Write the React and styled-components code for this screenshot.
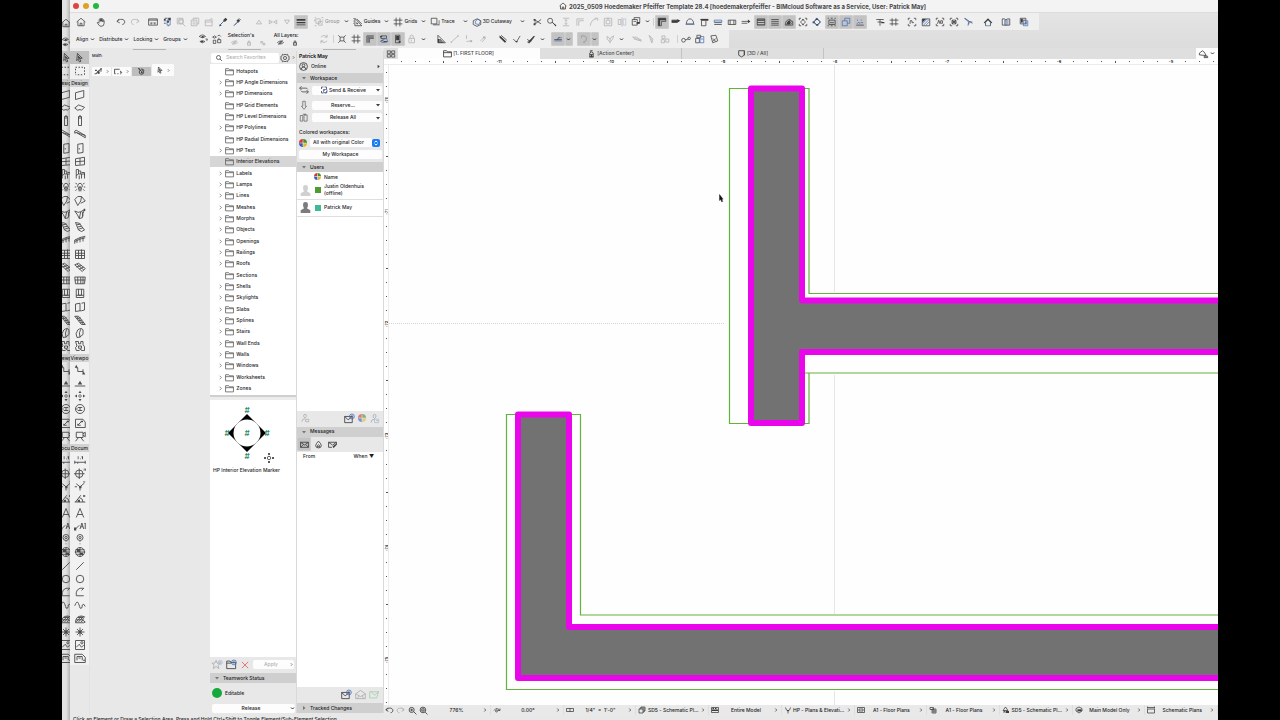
import React, { useState } from 'react';
import styled, { createGlobalStyle, css } from 'styled-components';

const GlobalStyle = createGlobalStyle`
  * { box-sizing: border-box; }
  body { margin: 0; background: #000; }
  button, input, select { font: inherit; color: inherit; }
  button { border: 0; padding: 0; margin: 0; background: none; }
`;

/* every icon is drawn in a 16 x 16 box: [strokes, solid parts, accent strokes] */
const ICONS = {
  home: ['M1 8 8 2l7 6M3 7v7h10V7M6.500 14v-4h3v4'],
  hand: ['M5 9V4q1-1.500 2 0v3V2.500q1-1.500 2 0V7 3.500q1-1.500 2 0V8 5.500q1-1.500 2 0V10q0 5-5 5-3 0-6-6 1-2 3 1'],
  undo: ['M5 3 1.500 7 6 9.500M2 7c4-5 12-4 12 1 0 2-2 4-4 4'],
  redo: ['M11 3l3.500 4L10 9.500M14 7C10 2 2 3 2 8c0 2 2 4 4 4'],
  info: ['M1 3h14v10H1zM1 5h14M5 8v3M8 8v1M8 10v1M11 8v3M4 11h2M10 11h2'],
  pickup: ['M4 2h5M3 6h3M3 10h3', 'M8 6h3v3H8zM3 3h3v2H3zM10 1h4v4h-4z', 'M8 5h5v8H8zM10 13v2'],
  find: ['M2 2h9v9H2zM4 5h5M4 8h3M11 11l4 4M12 7a4 4 0 1 1-8 0 4 4 0 0 1 8 0'],
  sheet: ['M2 5h9v9H2zM5 5V2h9v9h-3M4 8h5M4 11h5M8 2V1M11 2V1'],
  sheet2: ['M2 5h11v9H2zM2 8h11M9 5l3-3 2 2'],
  pipette: ['M3 13 9 7', 'M8 5 12 1l3 3-4 4zM2 15l1-4 3 2z', 'M3 13 10 6'],
  syringe: ['M3 14 9 8M11 2l3 3', 'M7 6l3-3 3 3-3 3z', 'M4 13l6-6'],
  triUp: ['M4 11h8L8 5z'],
  bow: ['M2 5v6l5-3zM14 5v6L9 8z'],
  triDown: ['M4 5h8l-4 6z'],
  layers: ['', 'M1 3h14v3H1zM1 8h14v2H1zM1 12h14v1H1z'],
  group: ['M3 3h7v7H3zM7 7h6v6H7zM1 1h2M12 1h3M1 14h3M14 4v2M1 4v3'],
  guides: ['M3 2v12h11zM6 9v2h2zM1 2v1M1 6v1M1 10v1M6 3l8 8'],
  grids: ['M5 1v14M11 1v14M1 5h14M1 11h14'],
  trace: ['M2 2h9v9H2z', 'M5 13h10V5h-1v7H5z'],
  cutaway: ['M2 6l6-3 6 3v6l-6 3-6-3z', '', 'M5 8l4-5 5 3-3 6-5-1z'],
  split: ['M2 4l11 7M2 12 13 4M2 8h3', 'M1 3h3v3H1zM1 10h3v3H1z'],
  lens: ['M9 6a4 4 0 1 1-8 0 4 4 0 0 1 8 0M8 8l6 6', 'M8 8l7 5-1 2z'],
  arrowsV: ['M3 2h10M3 14h10M8 4v8M6 6l2-2 2 2M6 10l2 2 2-2'],
  corner: ['M3 14V3h11M6 14V6h8'],
  curve: ['M2 14q1-10 10-11M9 2h5v4'],
  box: ['M2 2h12v12H2zM5 5h6v6H5zM8 1v4'],
  mirror: ['M8 1v14M2 4h4v8H2z', '', 'M10 3h4v10h-4z'],
  stack: ['M2 4h8v9H2zM5 4V1h9v8h-4M4 7h4', 'M9 8h5v3H9z'],
  wallCorner: ['M2 14V2h12v5H7v7z', 'M2 2h12v3H5v9H2z'],
  wallEnd: ['M1 5h9M1 8h9', 'M1 5h9v4H1zM10 3l5 3-5 3z'],
  dome: ['M2 11q1-8 6-8t6 8z', '', 'M1 12h14'],
  wallTop: ['M2 4h12M4 6v8h7V6', 'M3 3h12v3H3z'],
  bars: ['M2 9h12M2 12h12', '', 'M2 5h12v3H2z'],
  boxes: ['M2 5h12v7H2zM5 5v7M11 5v7'],
  arrowR: ['M1 7h12M1 10h9', 'M11 4l4 3-4 3z'],
  hatch: ['M2 3h12v10H2z', 'M2 4h12v2H2zM2 8h12v1H2zM2 11h12v1H2z'],
  lines: ['M2 4h12M2 7h12M2 10h12M2 13h12'],
  fillHatch: ['M2 13q0-9 8-9 0 3 4 3v6zM4 12l6-6M7 12l5-5M10 12l3-3', 'M4 12q0-6 6-7v7z'],
  diamondBox: ['M2 5V2h3M11 2h3v3M14 11v3h-3M5 14H2v-3M8 4l4 4-4 4-4-4z', 'M7 3h2v2H7zM7 11h2v2H7z'],
  diamond: ['M8 3l5 5-5 5-5-5z', 'M7 1l3 2-2 2-3-1zM7 11h3v3H7zM1 7h3v3H1z', 'M8 2l6 6-6 6-6-6z'],
  suspend: ['M3 5h10v7H3zM1 2h2M6 2h3M12 2h2M1 14h2M6 14h3M12 14h2M5 9h6'],
  copyBlue: ['', '', 'M2 6h8v8H2zM6 6V2h8v8h-4'],
  users: ['M2 13h12', '', 'M3 11l3-3 2 3M9 9h4M4 4v2M10 4v2'],
  align: ['M2 4h12M4 8h8M8 4v10', 'M10 8h5v2h-5z'],
  beams: ['M1 5h14M1 11h14M5 2v12M11 2v12'],
  bracket: ['M2 5V2h3M11 2h3v3M14 11v3h-3M5 14H2v-3M5 6h3v3h3M5 11V6'],
  hatchBlue: ['M2 3h12v11H2z', 'M2 3h6l-6 6z', 'M4 13l9-9M8 13l6-6M2 11l8-8'],
  label: ['M2 5V2h3M11 2h3v3M14 11v3h-3M5 14H2v-3M4 11l2-6 2 6M9 6h3v4H9z'],
  gears: ['M2 5V2h3M11 2h3v3M14 11v3h-3M5 14H2v-3M5 5l6 6M11 5l-6 6M4 8h8M5 5h6v6H5z'],
  node: ['M3 2l7 5-1 5M10 7l5 3', '', 'M2 2l6 5M9 7l6 1M9 7l-1 7'],
  roof: ['M4 9v5M12 9v5', 'M1 9l7-7 7 7-2 1-5-5-5 5z', 'M4 14h8'],
  book: ['M8 4v10M2 3h4l2 2 2-2h4v10H2z', '', 'M6 4v9M11 4v9'],
  windows: ['M2 2h9v9H2zM5 5h5', 'M3 3h3v6H3z', 'M7 6h7v8H7zM9 9h4M9 11h4'],
  eyes: ['M2 4q5-5 10 0-5 4-10 0M3 12q4-3 8 0-4 4-8 0M12 8h3l-1 3', 'M6 3h3v3H6zM5 11h3v2H5z'],
  eyeLock: ['M1 5q3-4 6 0-3 3-6 0M9 3q3-3 5 1M2 10h4v5H2zM9 9h5v5H9zM11 9V6'],
  eyeOff: ['M1 8q7-7 14 0-7 7-14 0M3 14 13 2M10 8a2 2 0 1 1-4 0 2 2 0 0 1 4 0'],
  lock: ['M4 7h8v7H4zM6 7V3q2-2 4 0v4', 'M7 9h2v3H7z'],
  trail: ['M2 4h5v4H2zM8 9h5v4H8z'],
  cycle: ['M3 5q5-5 10 0M13 1v4H9M3 11q5 5 10 0M3 15v-4h4'],
  snap: ['M5 5h6v6H5zM2 2l3 3M14 2l-3 3M2 14l3-3M14 14l-3-3'],
  gridHash: ['M5 1v14M11 1v14M1 5h14M1 11h14'],
  cornerOn: ['M3 14V3h11M7 14V7h7M5 14v-9h9'],
  snapBlue: ['M3 3h9v4H3zM2 12l3-2 3 2', 'M2 3h3v2H2zM8 11h5v2H8z', 'M4 10l8-3 2 5-9 2z'],
  column: ['M4 2h7v12H4z', 'M5 3h5v7H5zM9 11h3v3H9z'],
  padlock: ['M3 7h9v7H3zM5 7V3q3-3 5 0v4M7 9v3'],
  setSquare: ['M3 2v12h12zM6 8v3h3z', 'M3 8v6h9v-2H5V8z'],
  dashLine: ['M2 13 13 3', 'M1 12h2v2H1zM12 2h2v2h-2z'],
  snapPt: ['M4 2v6M4 12l7-1', 'M10 10h3v3h-3z'],
  magnet: ['M4 11l6-6M6 13l6-6', 'M8 4h4v3H8z'],
  quick: ['M12 9a4 4 0 1 1-8 0 4 4 0 0 1 8 0M3 3l5 5M8 3l5 3', 'M7 8h3v3H7zM2 2h3v2H2z'],
  polyMode: ['M1 12h3l3-5h7M5 12l6-8', 'M2 5h3v2H2zM11 2h3v3h-3zM7 9h3v3H7z'],
  areaMode: ['M1 12V4h9M1 12h2M6 12h2M11 12h2', 'M11 6l4 4-4 0z'],
  slash2: ['M2 3l11 10M5 2l9 8', 'M2 5l9 9 2-2-9-9z'],
  tee: ['M2 8l5 5 6-10', 'M5 11l3 3 1-3z'],
  cross: ['M2 8l5 5L14 3M2 13 13 5', 'M3 14l9-11 1 1-8 11z'],
  gravity: ['M2 9h12M6 9l5-4', '', 'M2 11h12M8 6h6'],
  arc: ['M4 3q8-1 8 5 0 4-5 5M4 3v3M7 13l2 1'],
  leaf: ['M3 4q3 0 5 5 1-5 6-6M3 4q-1 5 5 9 5-4 6-10M8 9v6'],
  slabs: ['M1 5h6l8 5H9zM3 8h6l6 4'],
  wedge: ['M5 2l6 6-2 6z', '', 'M7 5l4 9'],
  chain: ['M3 3h5v4H3zM2 9h5v5H2zM9 8h5v5H9z'],
  key: ['M7 10a3 3 0 1 1-6 0 3 3 0 0 1 6 0M7 9h3l1-2M15 7a2 2 0 1 1-4 0 2 2 0 0 1 4 0'],
  lockDoc: ['M3 2h6v4H3zM1 7h6v7H1z', '', 'M8 4h6v10H8zM9 8h4'],
  tagDoc: ['M3 3l8-1 3 9-8 3zM6 7l5 5M11 7l-5 5'],
  arrow: ['M5 2l7 7-4 .5 2 4-2 1-2-4-2 2z', 'M6 5l4 4-3 0-1 2z'],
  marquee: ['M2 3h2M6 3h2M10 3h2M14 3v2M14 7v2M14 11v2M11 13H9M7 13H5M3 13H2M2 11V9M2 7V5'],
  wall: ['M2 5l11-3v9L2 14z'],
  slab: ['M1 8l5-4 3 1 5 2-4 4-2-1-3 1z'],
  pillar: ['M6 2h4v12H6zM6 4h4M7 1h2'],
  beam: ['M1 4l2-1 12 7v3L3 6 1 7zM3 6l12 4'],
  door: ['M5 3l7-1v12l-7 1zM7 8v2'],
  window: ['M2 5l12-2v10L2 14zM8 4v9M2 9l12-1'],
  chair: ['M3 2h3v6h4v6M3 2v12M6 8l-3 2M10 8h4v6M10 6h4v4M7 10v5M6 4h3v4'],
  bulb: ['M8 3a3.500 3.500 0 0 0-2 6v2h4V9a3.500 3.500 0 0 0-2-6M6 13h4M2 3l2 1M14 3l-2 1M1 8h2M13 8h2M2 13l2-2M14 13l-2-2M7 7l1 3 1-3'],
  roofTool: ['M1 6l4-4h5l-1 6-4 6zM10 2l5 6-6 3'],
  shell: ['M1 4q5 3 8 1l5-3q-3 6-3 11l-4 1Q5 9 1 4M9 5l-2 9M11 5l1 6', 'M13 1h2v3h-2z'],
  stair: ['M2 2l5 1 7 9-4 2-4-2zM4 5l5-1M5 8l5-1M6 11l6-2'],
  rail: ['M1 8q7-4 14-5M1 8v5M4 7v5M8 5v6M12 4v6M1 10q7-4 14-5'],
  curtain: ['M2 3h12v11H2zM6 3v11M10 2v12M2 7h12M2 10h12'],
  mesh: ['M1 5l5-2 9 7-4 4zM3 8l7-2M7 11l6-3M4 4l9 8'],
  glass: ['M1 4h14l-1 9H2zM1 8h14M5 4v9M9 4v9M12 4v9'],
  zoneTool: ['M3 3h10v11H3zM6 3v8h4V3M3 11h10'],
  opening: ['M2 4l6-1v10l-6 1zM10 3l4-1v10l-4 1M8 13h2'],
  ramp: ['M1 3h5l9 11h-5zM4 6l5-1M6 9l5-1M8 12l5-1M3 3l10 11'],
  morph: ['M5 4q5-4 7 0v6q-5 5-8 4-3-5 1-10M9 3q-3 4-1 11'],
  cloud: ['M2 2h4v3h3V2h3v4l2 3v5h-4l-1-2-2 2H3l-1-4 2-2zM6 8h4v3H6z'],
  section: ['M3 5h2v5h7M12 7v6', 'M1 5l2-4 2 4zM11 14l2-4 2 4z'],
  elevation: ['M1 12h14', 'M5 10l3-5 3 5z'],
  intElev: ['M8 6l2 2-2 2-2-2z', 'M8 1l2 3H6zM8 15l2-3H6zM1 8l3-2v4zM15 8l-3-2v4z'],
  worksheet: ['M14 8A6 6 0 1 1 2 8a6 6 0 0 1 12 0M5 6h6M5 10h6M8 6v4M2 8h3'],
  detail: ['M2 3h10l3 4v7H2zM5 11l5-5M5 11V9M5 11h4', 'M9 5h3v2H9z'],
  camera: ['M3 3h9v7H3zM15 3l-3 2M15 9l-3-2M15 3v6M6 10l-4 5M9 10l4 5'],
  dim: ['M1 11h14M1 9v4M15 9v4M5 11v2', 'M5 3h1v4H5zM8 6h1v1H8zM10 3h2v4h-1z'],
  level: ['M12 9A5 5 0 1 1 2 9a5 5 0 0 1 10 0M7 2v14M0 9h14', 'M13 2h1v3h-1zM15 2h1v3h-1z'],
  radial: ['M8 9v5M8 9 3 5M8 9l6-5M1 9h3', 'M7 8h3v3H7zM12 2h3v1h-3z'],
  angle: ['M1 12h14M2 12l7-9M7 6q5 1 5 6', 'M5 9h3v3H5zM12 3h3v2h-3z'],
  letter: ['M3 14 8 2l5 12M5 10h6'],
  labelTool: ['M2 12l5-5M8 12l2.500-8 2.500 8M9 9h3M14 5l1-1v8', 'M0 10h3v4H0z'],
  pin: ['M12 6a4 4 0 1 1-8 0 4 4 0 0 1 8 0M9.500 6a1.500 1.500 0 1 1-3 0 1.500 1.500 0 0 1 3 0M8 11v1M8 14v1'],
  globe: ['M14 8A6 6 0 1 1 2 8a6 6 0 0 1 12 0M2 5h12M1 8h14M3 11h10M8 2v12', 'M4 4h4v4H4zM8 9h4v3H8z'],
  line: ['M3 13 13 3'],
  circle: ['M13 8A5 5 0 1 1 3 8a5 5 0 0 1 10 0'],
  polyline: ['M13 3H8Q3 5 3 9v4h10M10 6l3-3'],
  spline: ['M1 9q3-8 5-3t2 6q3 2 3-4 2-3 4 2'],
  fill: ['M2 13q0-9 8-9l4 1-3 4 4 3-2 1zM3 12l7-8M6 12l6-7M9 12l4-3M3 9h8M5 6h7'],
  hotspot: ['M8 2v12M2 8h12M4 4l8 8M12 4l-8 8', 'M6 6h4v4H6z'],
  figure: ['M2 2h12v12H2zM3 11l4-4 3 4 3-3M12 5a1.500 1.500 0 1 1-3 0 1.500 1.500 0 0 1 3 0'],
  drawing: ['M1 3h10l4 4v7H1zM4 11V6h7v5M6 8h3M12 11h3'],
  folder: ['M1 3v11h14V5H8L6.500 3H1zM1 6.500h14'],
  chevron: ['M6 4l4 4-4 4'],
  caret: ['', 'M4 6h8l-4 5z'],
  caretR: ['', 'M6 4v8l5-4z'],
  search: ['M11 7a4 4 0 1 1-8 0 4 4 0 0 1 8 0M10 10l4 4'],
  gear: ['M8 2l2 1 2-1 1 3 2 1-1 2 1 2-2 1-1 3-2-1-2 1-2-1-2 1-1-3-2-1 1-2-1-2 2-1 1-3 2 1zM10.500 8a2.500 2.500 0 1 1-5 0 2.500 2.500 0 0 1 5 0'],
  person: ['M10.500 6a2.500 2.500 0 1 1-5 0 2.500 2.500 0 0 1 5 0M4 13q0-4 4-4t4 4M15 8A7 7 0 1 1 1 8a7 7 0 0 1 14 0'],
  swap: ['M4 2 1 5l3 3M1 5h11l2 2M12 8l3 3-3 3M15 11H5L3 9'],
  down: ['M6 2h4v8h2l-4 5-4-5h2z'],
  release: ['M2 4h4v9H2zM8 3h5v10H8zM6 2h4M10 1v3'],
  sync: ['M3 6V2h4M9 2h4v4M13 10v4H9M7 14H3v-4', 'M7 7h3v2H7z', 'M7 7h7v6H7z'],
  bust: ['', 'M8 0q4 0 3.500 5 0 2-1.500 4l5 3v4H1v-4l5-3q-1.500-2-1.500-4Q4 0 8 0'],
  mail: ['M1 5h11v9H1zM1 5l5 5 6-5', '', 'M15 5a3.500 3.500 0 1 1-7 0 3.500 3.500 0 0 1 7 0M11.500 3v2h2'],
  mailOpen: ['M1 7l7-5 7 5v7H1zM1 7l7 4 7-4M3 14l3-4M13 14l-3-4'],
  mailOk: ['M1 4h13l-3 9H1zM3 4l5 5 6-5'],
  mailBox: ['M1 4h14v9H1zM1 4l7 5 7-5M1 13l5-5M15 13l-5-5'],
  drop: ['M8 2q5 5 5 8 0 4-5 4t-5-4q0-3 5-8M6 10q2-3 4 0v2H6z'],
  mailEdit: ['M1 4h14v5M1 4v9h6M1 4l7 5 7-5', 'M8 12l5-5 2 2-5 5z'],
  userTag: ['M8 2q3 0 2 4l-2 2-2-2q-1-4 2-4M3 14q0-5 5-5M9 10h5v4H9z', '', ''],
  userBlue: ['M8 2q3 0 2 4l-2 2-2-2q-1-4 2-4M3 14q0-5 5-5', '', 'M8 9h6v5H8zM10 11h3'],
  star: ['M6 2l1.500 4H12L9 9l1 5-4-3-4 3 1-5-3-3h4z', '', 'M15 5a3 3 0 1 1-6 0 3 3 0 0 1 6 0M12 3v4M10 5h4'],
  folderAdd: ['M1 4v10h13V5H7L6 3H1zM1 6h7', '', 'M15 5a3.500 3.500 0 1 1-7 0 3.500 3.500 0 0 1 7 0M11.500 3v4M9.500 5h4'],
  close: ['M3 3l10 10M13 3 3 13'],
  quad: ['M2 3h5v4H2zM9 3h5v4H9zM2 9h5v4H2zM9 9h5v4H9z'],
  action: ['M5 14V7l3-2 3 2v7zM4 14h8M5 10h6M6 5V3h4', 'M7 10h2v4H7z'],
  cube: ['M3 3h10v8l-5 3-5-3zM13 3v8'],
  cloudTool: ['M2 10q-1-3 2-4 2-4 5 0l3 5zM9 12h5v2H9z'],
  zoomIn: ['M11 7a4.500 4.500 0 1 1-9 0 4.500 4.500 0 0 1 9 0M10 10l5 5M4 7h5M6.500 4.500v5'],
  zoomFit: ['M12 7a5 5 0 1 1-10 0 5 5 0 0 1 10 0M11 11l4 4M5 5h4v4H5z'],
  rotate: ['M2 9q3-6 9-3l2 3M10 9h4V5M5 10a2 2 0 1 0 4 0 2 2 0 0 0-4 0'],
  scale: ['M1 5h14v6H1zM8 5v6'],
  copies: ['M2 6h8v8H2zM4 6V4h8v8h-2M6 4V2h8v8h-2'],
  model: ['M1 3h14v10H1z', 'M2 7h12v3H2zM3 4h3v2H3zM8 4h3v2H8z'],
  pen: ['M3 3q1 6 5 7 4-1 5-7M8 10v5', 'M6 8h4v2H6z'],
  frame: ['M1 3h14v10H1zM4 6h8v4H4z'],
  folderDoc: ['M2 3h7v4H2zM6 6h8v8H6zM8 8h4v4H8z'],
  override: ['M7 2l5 7H2zM2 12h12M5 9v3M10 9v3', 'M8 10h6v4H8z'],
  reno: ['M2 5l6-3 6 3v5l-6 4-6-4zM4 8h9M4 10h9', 'M6 7h7v3H6z'],
  dimStd: ['M1 6h14v8H1zM1 3h14M1 1v4M15 1v4'],
};

const Svg = styled.svg`
  display: block;
  flex: none;
  width: ${p => p.$s}px;
  height: ${p => p.$s}px;
  opacity: ${p => (p.$dim ? 0.35 : 1)};
  color: ${p => p.$c || '#3c3c3e'};
  fill: none;
  stroke: currentColor;
  stroke-width: ${p => (p.$s < 7 ? 2 : p.$s < 10 ? 1.5 : 1.2)};
  overflow: visible;
`;

const Icon = ({ name, size = 11, dim, color, accent = '#4a6fb5' }) => {
  const [d, solid, extra] = ICONS[name];
  return (
    <Svg viewBox="0 0 16 16" $s={size} $dim={dim} $c={color} aria-hidden="true">
      {d && <path d={d} />}
      {solid && <path d={solid} fill="currentColor" stroke="none" />}
      {extra && <path d={extra} stroke={accent} />}
    </Svg>
  );
};

const Screen = styled.div`
  display: flex;
  height: 100vh;
  padding: 0 62px;
  overflow: hidden;
  background: #000;
  color: #1d1d1f;
  font: 500 5px/7px Inter, "Liberation Sans", sans-serif;
  white-space: nowrap;
`;

const BackWindow = styled.div`
  display: flex;
  flex-direction: column;
  align-items: center;
  flex: none;
  width: 8px;
  padding-top: 13px;
  overflow: hidden;
  background: linear-gradient(90deg, #e2e2e2 50%, #b4b4b4);
`;

const BackTools = styled.div`
  display: flex;
  flex-direction: column;
  justify-content: space-around;
  flex: none;
  height: 38px;
`;

const Window = styled.div`
  display: flex;
  flex-direction: column;
  flex: 1;
  min-width: 0;
  background: #e8e8e8;
  overflow: hidden;
`;

const TitleBar = styled.header`
  display: flex;
  align-items: center;
  height: 13px;
  flex: none;
  padding-left: 3px;
  gap: 3px;
  background: #f3f3f3;
  border-bottom: 1px solid #dcdcdc;
`;

const Light = styled.button`
  width: 6px;
  height: 6px;
  margin-right: 1px;
  border-radius: 50%;
  background: ${p => p.$c};
`;

const Title = styled.h1`
  display: flex;
  align-items: center;
  justify-content: center;
  gap: 2px;
  flex: 1;
  margin: 0;
  padding-left: 164px;
  font-size: 6px;
  font-weight: 700;
  color: #48484a;
`;

const ToolRow = styled.div`
  display: flex;
  align-items: center;
  align-self: flex-start;
  flex: none;
  height: ${p => p.$h || 17}px;
  padding: 0 7px 0 4px;
  background: #efefef;
`;

const ToolBand = styled.div`
  display: flex;
  flex-direction: column;
  flex: none;
  background: linear-gradient(#e4e4e4, #dcdcdc);
`;

const Group = styled.div`
  display: flex;
  align-items: center;
  height: ${p => (p.$h ? `${p.$h}px` : 'auto')};
  margin-right: ${p => p.$gap || 4}px;
`;

const ToolButton = styled.button`
  display: flex;
  align-items: center;
  justify-content: center;
  width: 14px;
  height: 14px;
  ${p => p.$on && css`
    background: #c3c3c4;
    border-radius: 2px;
    box-shadow: inset 0 0 0 1px #cdcdcd;
  `}
`;

const CaretButton = styled(ToolButton)`
  width: 8px;
`;

const MenuButton = styled.button`
  display: flex;
  align-items: center;
  gap: 1px;
  height: 14px;
  padding: 0 2px;
  color: ${p => (p.$dim ? '#9a9a9a' : '#2c2c2e')};

  & > svg:last-child {
    margin-left: ${p => (p.$wide ? 7 : p.$icon ? 3 : 1)}px;
  }
`;

const Sep = styled.span`
  width: 1px;
  height: 8px;
  margin: 0 1px;
  background: #cfcfcf;
`;

const LayerBlock = styled.div`
  display: flex;
  flex-direction: column;
  width: ${p => p.$w}px;
  padding-left: 3px;
  margin-right: 2px;

  & > div {
    display: flex;
    align-items: center;
    gap: 8px;
    padding-left: 3px;
  }
`;

const Caret = () => (
  <svg width="5" height="5" viewBox="0 0 5 5" fill="none" stroke="#333" aria-hidden="true">
    <path d="M1 1.500 2.500 3 4 1.500" />
  </svg>
);

const Tool = ({ name, on, dim, size }) => (
  <ToolButton $on={on} aria-label={name}>
    <Icon name={name} dim={dim} size={size || 10} />
  </ToolButton>
);

/* "name" plain, "name!" pressed, "name~" greyed out */
const Tools = ({ list, gap, size, h }) => (
  <Group $gap={gap} $h={h}>
    {list.split(' ').map((t, i) => (
      <Tool key={i} name={t.replace(/[!~]/g, '')} on={t.includes('!')} dim={t.includes('~')} size={size} />
    ))}
  </Group>
);

const Menu = ({ icon, children, dim, wide }) => (
  <MenuButton $dim={dim} $icon={icon} $wide={wide}>
    {icon && <Icon name={icon} dim={dim} size={10} />}
    {children}
    <Caret />
  </MenuButton>
);

const Body = styled.div`
  display: flex;
  flex: 1;
  min-height: 0;
`;

const Dock = styled.aside`
  display: flex;
  flex-direction: column;
  flex: none;
  width: 314px;
`;

const Handles = styled.div`
  display: flex;
  flex: none;
  height: 3px;
  padding: 1px 28px 0 63px;
  justify-content: space-between;

  span {
    width: 33px;
    height: 1px;
    background: #b4b4b4;
  }
`;

const DockColumns = styled.div`
  display: flex;
  flex: 1;
  min-height: 0;
`;

const ToolboxBox = styled.nav`
  flex: none;
  width: 19px;
  align-self: ${p => (p.$back ? 'center' : 'flex-start')};
  background: ${p => (p.$back ? 'none' : '#f1f1f1')};
`;

const ToolSection = styled.div`
  button:nth-child(4n) {
    margin-bottom: 1px;
  }
`;

const BoxTool = styled.button`
  display: flex;
  align-items: center;
  justify-content: center;
  width: 19px;
  height: 13px;
  background: ${p => (p.$on ? '#bfbfc0' : 'none')};
`;

const BoxHead = styled.div`
  height: 8px;
  margin: 2px 0 1px;
  line-height: 8px;
  text-align: center;
  background: ${p => (p.$back ? '#c6c6c6' : '#d2d2d2')};
`;

const DESIGN = 'wall slab pillar beam door window chair bulb roofTool shell stair rail curtain mesh glass zoneTool opening ramp morph cloud';
const VIEW = 'section elevation intElev worksheet detail camera';
const DOCUMENT = 'dim level radial angle letter labelTool pin globe line circle polyline spline fill hotspot figure drawing';

const Toolbox = ({ back }) => {
  const section = list => (
    <ToolSection>
      {list.split(' ').map(n => (
        <BoxTool key={n} aria-label={n}><Icon name={n} size={12} color="#4a4a4c" /></BoxTool>
      ))}
    </ToolSection>
  );
  return (
    <ToolboxBox $back={back} aria-hidden={back}>
      <BoxTool $on aria-label="arrow"><Icon name="arrow" size={11} /></BoxTool>
      <BoxTool aria-label="marquee"><Icon name="marquee" size={12} /></BoxTool>
      <BoxHead $back={back}>Design</BoxHead>
      {section(DESIGN)}
      <BoxHead $back={back}>Viewpo</BoxHead>
      {section(VIEW)}
      <BoxHead $back={back}>Docum</BoxHead>
      {section(DOCUMENT)}
    </ToolboxBox>
  );
};

const MainPalette = styled.div`
  flex: 1;
  padding: 1px 0 0 2px;
  font-size: 4px;
  border-left: 1px solid #e2e2e2;
`;

const PaletteRow = styled.div`
  display: flex;
  align-items: flex-end;
  gap: 1px;
  margin-top: 5px;
`;

const PaletteButton = styled.button`
  display: flex;
  align-items: center;
  justify-content: center;
  gap: 2px;
  width: ${p => (p.$tall ? 22 : 19)}px;
  height: ${p => (p.$tall ? 12 : 9)}px;
  border-radius: 1px;
  background: ${p => (p.$on ? '#bdbdbe' : '#fbfbfb')};
`;

const Panel = styled.section`
  display: flex;
  flex-direction: column;
  flex: none;
  width: 87px;
  margin-bottom: 2px;
  border-right: 1px solid #d9d9d9;
`;

const SearchRow = styled.div`
  display: flex;
  align-items: center;
  flex: none;
  height: 13px;
  gap: 1px;

  label {
    display: flex;
    align-items: center;
    gap: 3px;
    flex: 1;
    height: 10px;
    padding-left: 4px;
    margin-left: 1px;
    border-radius: 2px;
    background: #fff;
  }

  input {
    width: 50px;
    border: 0;
    padding: 0;
    outline: 0;
    background: none;
    font-weight: 400;
  }

  input::placeholder { color: #a8a8aa; }
`;

const List = styled.ul`
  flex: none;
  margin: 0;
  padding: 2px 0 1px;
  list-style: none;
  background: #fff;

  li:nth-child(3n) { margin-bottom: 1px; }
`;

const Item = styled.li`
  display: flex;
  align-items: center;
  gap: 1px;
  height: 11px;
  padding-left: 7px;
  background: ${p => (p.$on ? '#d6d6d7' : 'none')};
`;

const Arrow = styled.span`
  display: block;
  width: 7px;
  visibility: ${p => (p.$leaf ? 'hidden' : 'visible')};
`;

const Splitter = styled.div`
  height: 5px;
  flex: none;
  border-top: 2px solid #cfcfcf;
  background: #ececec;
`;

const White = styled.div`
  flex: ${p => (p.$h ? 'none' : 1)};
  min-height: ${p => p.$h || 0}px;
  background: #fff;
`;

const Caption = styled.div`
  padding: 1px 3px;
`;

const Bar = styled.div`
  display: flex;
  align-items: center;
  flex: none;
  gap: 3px;
  height: 15px;
  padding: 0 ${p => (p.$end ? 3 : 2)}px;
  justify-content: ${p => (p.$end ? 'flex-end' : 'flex-start')};

  span { flex: 1; }
`;

const Head = styled.h2`
  display: flex;
  align-items: center;
  gap: 2px;
  flex: none;
  height: 10px;
  margin: 1px 0 0;
  padding-left: 3px;
  font-size: 5px;
  font-weight: 500;
  background: #cfcfd0;
`;

const Field = styled.button`
  display: flex;
  align-items: center;
  flex: 1;
  height: 9px;
  border-radius: 2px;
  background: #fdfdfd;
  color: ${p => (p.$off ? '#b0b0b0' : 'inherit')};

  b {
    display: flex;
    align-items: center;
    justify-content: center;
    gap: 1px;
    flex: 1;
    font-weight: 500;
  }
`;

const Line = styled.div`
  display: flex;
  align-items: center;
  flex: none;
  gap: 3px;
  height: ${p => p.$h || 12}px;
  padding: 0 1px 0 2px;
`;

const Note = styled(Line)`
  padding-top: 4px;
`;

const Stretch = styled.span`
  flex: 1;
`;

const Dot = styled.i`
  width: 10px;
  height: 10px;
  border-radius: 50%;
  background: #16a83c;
`;

const Select = styled.select`
  appearance: none;
  flex: 1;
  width: 50px;
  height: 9px;
  padding: 0 0 0 3px;
  border: 0;
  border-radius: 2px;
  background: #fdfdfd;
`;

const Stepper = styled.i`
  display: flex;
  align-items: center;
  justify-content: center;
  width: 8px;
  height: 8px;
  margin: 0 2px 0 -3px;
  border-radius: 2px;
  background: #1a7cf0;
`;

const Users = styled.table`
  width: 100%;
  border-collapse: collapse;
  background: #fff;

  th { font-weight: 500; text-align: left; height: 10px; }
  td, th { padding: 0; }
  td { height: 17px; border-bottom: 1px solid #dedede; }
  td:first-child { width: 17px; padding-left: 3px; }
  td:nth-child(2), th:nth-child(2) { width: 10px; }
  td:nth-child(2) { padding-left: 1px; }
`;

const Swatch = styled.i`
  display: block;
  width: 6px;
  height: 6px;
  background: ${p => p.$c};
`;

const Messages = styled.table`
  width: 100%;
  border-collapse: collapse;
  background: #fff;

  th { width: 50%; height: 9px; padding: 0 9px 0 6px; font-weight: 500; text-align: left; }
  th:last-child { padding-left: 0; text-align: right; }
`;

const Wheel = ({ size = 7, dim }) => (
  <svg width={size} height={size} viewBox="0 0 16 16" opacity={dim ? 0.6 : 1} aria-hidden="true">
    <path d="M8 8V0a8 8 0 0 0-8 8z" fill="#d9362c" />
    <path d="M8 8h8a8 8 0 0 0-8-8z" fill="#3b8f3a" />
    <path d="M8 8v8a8 8 0 0 0 8-8z" fill="#e7b52c" />
    <path d="M8 8H0a8 8 0 0 0 8 8z" fill="#2f5fc4" />
    <path d="M8 1v14M1 8h14" stroke="#fff" />
  </svg>
);

const StepperIcon = () => (
  <svg width="6" height="6" viewBox="0 0 6 6" fill="none" stroke="#fff" aria-hidden="true">
    <path d="M1.500 2.300 3 1l1.500 1.300M1.500 3.700 3 5l1.500-1.300" />
  </svg>
);

const FAVORITES = [
  ['Hotspots', 1], ['HP Angle Dimensions'], ['HP Dimensions'], ['HP Grid Elements', 1], ['HP Level Dimensions', 1],
  ['HP Polylines'], ['HP Radial Dimensions', 1], ['HP Text'], ['Interior Elevations', 1], ['Labels'], ['Lamps'],
  ['Lines'], ['Meshes'], ['Morphs'], ['Objects'], ['Openings'], ['Railings'], ['Roofs'], ['Sections', 1], ['Shells'],
  ['Skylights'], ['Slabs'], ['Splines'], ['Stairs'], ['Wall Ends'], ['Walls'], ['Windows'], ['Worksheets'], ['Zones'],
];

const MarkerSvg = styled.svg`
  display: block;
  font: 600 8px Inter, sans-serif;
  text-anchor: middle;
`;

const Marker = () => (
  <MarkerSvg width="86" height="66" viewBox="210 400 86 66">
    <path d="M247 414l19 19-19 19-19-19z" fill="#000" />
    <circle cx="247" cy="433" r="13.500" fill="#fff" />
    <g fill="#2c8c6c">
      <text x="247" y="413">#</text>
      <text x="227" y="436">#</text>
      <text x="247" y="436">#</text>
      <text x="267" y="436">#</text>
      <text x="247" y="459">#</text>
    </g>
    <g fill="#222">
      <circle cx="269" cy="458" r="1.700" fill="#fff" stroke="#222" strokeWidth="0.700" />
      <circle cx="269" cy="454" r="1" /><circle cx="269" cy="462" r="1" />
      <circle cx="265" cy="458" r="1" /><circle cx="273" cy="458" r="1" />
    </g>
  </MarkerSvg>
);

const Favorites = () => {
  const [search, setSearch] = useState('');
  return (
    <Panel>
      <SearchRow>
        <label>
          <Icon name="search" size={8} />
          <input aria-label="Search Favorites" placeholder="Search Favorites" value={search} onChange={e => setSearch(e.target.value)} />
        </label>
        <Icon name="gear" size={10} />
        <Icon name="chevron" size={5} />
      </SearchRow>
      <List>
        {FAVORITES.map(([name, leaf]) => (
          <Item key={name} $on={name === 'Interior Elevations'}>
            <Arrow $leaf={leaf}><Icon name="chevron" size={7} color="#555" /></Arrow>
            <Icon name="folder" size={9} color="#666" />
            <Stretch>&nbsp;{name}</Stretch>
          </Item>
        ))}
      </List>
      <Splitter />
      <White>
        <Marker />
        <Caption>HP Interior Elevation Marker</Caption>
      </White>
      <Bar>
        <Icon name="star" dim />
        <Icon name="folderAdd" />
        <Icon name="close" size={10} color="#e0524c" />
        <Field $off disabled><b>Apply</b><Icon name="chevron" size={5} /></Field>
      </Bar>
      <Head><Icon name="caret" size={8} color="#777" />Teamwork Status</Head>
      <Line $h={20}><Dot />Editable</Line>
      <Line $h={10}><Field><b>Release</b><Caret /></Field></Line>
    </Panel>
  );
};

const Teamwork = () => (
  <Panel>
    <Line $h={10}><strong>Patrick May</strong></Line>
    <Line $h={11}>
      <Icon name="person" size={9} />
      <Stretch>Online</Stretch>
      <Icon name="caretR" size={7} />
    </Line>
    <Head><Icon name="caret" size={8} color="#777" />Workspace</Head>
    <Line $h={14}>
      <Icon name="swap" size={10} />
      <Field><b><Icon name="sync" size={8} />Send &amp; Receive</b><Icon name="caret" size={8} /></Field>
    </Line>
    <Line $h={16}><Icon name="down" size={10} color="#666" /><Field><b>Reserve...</b><Icon name="caret" size={8} /></Field></Line>
    <Line $h={9}><Icon name="release" size={10} color="#666" /><Field><b>Release All</b><Icon name="caret" size={8} /></Field></Line>
    <Note $h={16}><label htmlFor="colored">Colored workspaces:</label></Note>
    <Line $h={9}>
      <Wheel size={8} />
      <Select id="colored" defaultValue="orig"><option value="orig">All with original Color</option></Select>
      <Stepper><StepperIcon /></Stepper>
    </Line>
    <Line $h={14}><Field><b>My Workspace</b></Field></Line>
    <Head><Icon name="caret" size={8} color="#777" />Users</Head>
    <Users>
      <thead><tr><th /><th><Wheel /></th><th>Name</th></tr></thead>
      <tbody>
        <tr><td><Icon name="bust" size={11} color="#d0d0d0" /></td><td><Swatch $c="#4f9a32" /></td><td>Justin Oldenhuis<br />(offline)</td></tr>
        <tr><td><Icon name="bust" size={11} color="#7c7c7c" /></td><td><Swatch $c="#3dbb96" /></td><td>Patrick May</td></tr>
      </tbody>
    </Users>
    <White $h={194} />
    <Bar $end><Icon name="userTag" dim size={10} /><span /><Icon name="mail" /><Wheel size={8} dim /><Icon name="userBlue" dim /></Bar>
    <Head><Icon name="caret" size={8} color="#777" />Messages</Head>
    <Tools list="mailBox! drop mailEdit" h={15} size={9} />
    <Messages><thead><tr><th>From</th><th>When ▼</th></tr></thead></Messages>
    <White />
    <Bar $end><Icon name="mail" /><Icon name="mailOpen" dim /><Icon name="mailOk" dim color="#2f9a4a" /></Bar>
    <Head><Icon name="caretR" size={8} color="#777" />Tracked Changes</Head>
  </Panel>
);

const Work = styled.main`
  display: flex;
  flex-direction: column;
  flex: 1;
  min-width: 0;
  background: #fff;
`;

const Tabs = styled.div`
  display: flex;
  flex: none;
  height: 11px;
  background: #dfdfdf;
`;

const Tab = styled.button`
  display: flex;
  align-items: center;
  justify-content: center;
  gap: 1px;
  width: ${p => p.$w || 142}px;
  color: #48484a;
  background: ${p => (p.$on ? '#fdfdfd' : 'none')};
  border-right: 1px solid ${p => (p.$on || p.$w ? 'transparent' : '#c4c4c4')};
`;

const Ruler = styled.svg`
  display: block;
  flex: none;
  width: 100%;
  height: 6px;
  border-bottom: 1px solid #ececec;
  font: 500 4px Inter, sans-serif;
  text-anchor: middle;
`;

const SideRuler = styled(Ruler)`
  width: 5px;
  height: 100%;
  border: 0;
  border-right: 1px solid #ececec;
`;

const Plan = styled.div`
  display: flex;
  flex: 1;
  min-height: 0;
`;

const Drawing = styled.svg`
  flex: 1;
  min-width: 0;
  height: 100%;
  background: #fefefe;
`;

const FEET = [-11, -10, -9, -8, -7, -6, -5];

const TopRuler = () => (
  <Ruler>
    {FEET.map((n, i) => (
      <g key={n} transform={`translate(${115 + i * 112} 0)`}>
        <text y="4">{n}</text>
        {[1, 2, 3, 4, 5, 6, 7].map(k => <rect key={k} x={k * 14 - 112} y="2" width="1" height={k === 4 ? 2 : 1} fill="#555" />)}
      </g>
    ))}
    <path d="M801 2.500h1M815 2.500h1M829 2.500h1" stroke="#555" />
  </Ruler>
);

const LeftRuler = () => (
  <SideRuler>
    {[-70, -71, -72, -73, -74, -75].map((n, i) => (
      <g key={n} transform={`translate(0 ${35 + i * 112})`}>
        <text transform="translate(4 0) rotate(-90)">{n}</text>
        {[1, 2, 3, 4, 5, 6, 7].map(k => <rect key={k} x="2" y={k * 14 - 112} width={k === 4 ? 2 : 1} height="1" fill="#555" />)}
      </g>
    ))}
    <path d="M2 609.500h1M2 623.500h1M2 637.500h1" stroke="#555" />
  </SideRuler>
);

const FloorPlan = () => (
  <Drawing viewBox="389 65 829 640" preserveAspectRatio="xMinYMin slice" role="img" aria-label="1. First floor">
    <path d="M834.500 65v227M834.500 375v239M834.500 691v14" stroke="#e6e6e6" />
    <path d="M389 323.500h336" stroke="#d6d6d6" strokeDasharray="1 1" />
    <g fill="none" stroke="#62b23c" strokeWidth="1.200">
      <path d="M749 88.500h-19.500v335H749M803 88.500h6v205h420M804 373h425M809 373v50.500h-6" />
      <path d="M516 414.500h-9.500v275H1230M571 414.500h9.500v200.500h650" />
    </g>
    <g fill="#727272" stroke="#ea06ea" strokeWidth="6" strokeLinejoin="round">
      <path d="M751 88.500h51v212h440v51.500H802v71h-51z" />
      <path d="M518 414.500h51V627h680v51H518z" />
    </g>
    <path d="M719.500 194.500v6l1.200-1 1 2.300 1-.4-1-2.200h1.400z" fill="#111" stroke="#111" strokeWidth="0.400" />
  </Drawing>
);

const BottomBar = styled.div`
  display: flex;
  align-items: center;
  flex: none;
  height: 10px;
  background: #e9e9e9;
`;

const Zoomer = styled.div`
  display: flex;
  align-items: center;
  justify-content: space-around;
  width: 45px;
`;

const Quick = styled.button`
  display: flex;
  align-items: center;
  flex: ${p => (p.$w ? 'none' : 1)};
  width: ${p => p.$w || 0}px;
  min-width: 0;
  height: 10px;
  padding: 0 2px;
  border-right: 1px solid #dedede;

  span {
    flex: 1;
    text-align: center;
    overflow: hidden;
    text-overflow: ellipsis;
  }
`;

const QUICK = [
  ['rotate', '0.00°'], ['scale', '1/4"\u00a0 = \u00a01\'-0"'], ['copies', 'SD5 - Schematic Pl...'], ['model', 'Entire Model'],
  ['pen', 'HP - Plans & Elevati...'], ['frame', 'A1 - Floor Plans'], ['folderDoc', 'A1 - Floor Plans'],
  ['override', 'SD5 - Schematic Pl...'], ['reno', 'Main Model Only'], ['dimStd', 'Schematic Plans'],
];

const Status = styled.footer`
  flex: none;
  height: 5px;
  padding-left: 3px;
  line-height: 8px;
  overflow: hidden;
  background: #e8e8e8;
`;

export default function App() {
  return (
    <Screen>
      <GlobalStyle />
      <BackWindow>
        <BackTools>
          <Icon name="home" size={10} />
          <Icon name="eyes" size={10} />
        </BackTools>
        <Toolbox back />
      </BackWindow>
      <Window>
        <TitleBar>
          <Light $c="#e0443e" aria-label="Close" />
          <Light $c="#dea123" aria-label="Minimize" />
          <Light $c="#24b83a" aria-label="Full screen" />
          <Title><Icon name="home" size={8} />2025_0509 Hoedemaker Pfeiffer Template 28.4 [hoedemakerpfeiffer - BIMcloud Software as a Service, User: Patrick May]</Title>
        </TitleBar>
        <ToolBand>
          <ToolRow>
            <Tools list="home" gap={6} />
            <Tools list="hand" gap={6} />
            <Tools list="undo redo~" />
            <Tools list="info pickup find~ sheet~ sheet2~ pipette syringe" gap={8} />
            <Tools list="triUp~ bow~ triDown~ layers!" />
            <Menu icon="group" dim>Group</Menu>
            <Menu icon="guides">Guides</Menu>
            <Menu icon="grids">Grids</Menu>
            <Menu icon="trace" wide>Trace</Menu>
            <Menu icon="cutaway" wide>3D Cutaway</Menu>
            <Group />
            <Tools list="split lens arrowsV~ corner~ curve~ box~ mirror~ stack" gap={1} />
            <CaretButton aria-label="More"><Caret /></CaretButton>
            <Sep />
            <Tools list="wallCorner! wallEnd dome wallTop bars boxes arrowR" gap={1} />
            <Tools list="hatch! lines! fillHatch! diamondBox diamond" gap={1} />
            <Tools list="suspend! copyBlue! users!" gap={6} />
            <Tools list="align beams" />
            <Tools list="bracket hatchBlue label gears node" gap={6} />
            <Tools list="roof" />
            <Tools list="book" />
            <Tools list="windows" gap={1} />
          </ToolRow>
          <ToolRow $h={18}>
            <Menu>Align</Menu>
            <Menu>Distribute</Menu>
            <Menu>Locking</Menu>
            <Menu>Groups</Menu>
            <Group $gap={6} />
            <Tools list="eyes eyeLock" gap={1} />
            <LayerBlock $w={44}>
              Selection's
              <div><Icon name="eyeOff" size={7} dim /><Icon name="lock" size={6} dim /><Icon name="trail" size={6} dim /></div>
            </LayerBlock>
            <LayerBlock $w={30}>
              All Layers:
              <div><Icon name="eyeOff" size={7} /><Icon name="lock" size={6} /></div>
            </LayerBlock>
            <Group $gap={14} />
            <Tools list="cycle~" gap={1} />
            <Sep />
            <Tools list="snap gridHash cornerOn! snapBlue! column! padlock~" gap={1} />
            <CaretButton aria-label="More"><Caret /></CaretButton>
            <Group $gap={6} />
            <Tools list="setSquare dashLine~ snapPt~ magnet~" gap={6} />
            <Tools list="slash2 tee cross" gap={1} />
            <CaretButton aria-label="More"><Caret /></CaretButton>
            <Group />
            <ToolButton $on aria-label="gravity"><Icon name="gravity" size={10} /></ToolButton>
            <CaretButton $on aria-label="More"><Caret /></CaretButton>
            <Group />
            <ToolButton $on aria-label="arc"><Icon name="arc" size={10} dim /></ToolButton>
            <CaretButton $on aria-label="More"><Caret /></CaretButton>
            <Group />
            <Tools list="leaf~" gap={1} />
            <CaretButton aria-label="More"><Caret /></CaretButton>
            <Group />
            <Tools list="slabs~ wedge~ chain~" />
            <Sep />
            <Tools list="key lockDoc tagDoc" gap={1} />
          </ToolRow>
        </ToolBand>
        <Body>
          <Dock>
            <Handles><span /><span /><span /></Handles>
            <DockColumns>
              <Toolbox />
              <MainPalette>
                Main:
                <PaletteRow>
                  <PaletteButton aria-label="Method"><Icon name="polyMode" size={9} /><Icon name="chevron" size={5} /></PaletteButton>
                  <PaletteButton aria-label="Area"><Icon name="areaMode" size={9} /><Icon name="chevron" size={5} /></PaletteButton>
                  <PaletteButton $on aria-label="Quick selection"><Icon name="quick" size={9} /></PaletteButton>
                  <PaletteButton $tall aria-label="Arrow"><Icon name="arrow" size={8} /><Icon name="chevron" size={5} /></PaletteButton>
                </PaletteRow>
              </MainPalette>
              <Favorites />
              <Teamwork />
            </DockColumns>
          </Dock>
          <Work>
            <Tabs>
              <Tab $w={14} aria-label="Overview"><Icon name="quad" size={10} /></Tab>
              <Tab $on><Icon name="folder" size={9} />[1. FIRST FLOOR]</Tab>
              <Tab><Icon name="action" size={9} />[Action Center]</Tab>
              <Tab><Icon name="cube" size={9} />[3D / All]</Tab>
              <Stretch />
              <Tab $on $w={22} aria-label="Cloud"><Icon name="cloudTool" size={11} /><Caret /></Tab>
            </Tabs>
            <TopRuler />
            <Plan>
              <LeftRuler />
              <FloorPlan />
            </Plan>
            <BottomBar>
              <Zoomer>
                <Icon name="undo" size={9} />
                <Icon name="redo" size={9} dim />
                <Icon name="zoomIn" size={9} />
                <Icon name="zoomFit" size={9} />
              </Zoomer>
              <Quick $w={62}><span>776%</span><Icon name="chevron" size={6} /></Quick>
              {QUICK.map(([icon, text], i) => (
                <Quick key={i}><Icon name={icon} size={8} /><span>{text}</span><Icon name="chevron" size={6} /></Quick>
              ))}
            </BottomBar>
          </Work>
        </Body>
        <Status>Click an Element or Draw a Selection Area. Press and Hold Ctrl+Shift to Toggle Element/Sub-Element Selection.</Status>
      </Window>
    </Screen>
  );
}
